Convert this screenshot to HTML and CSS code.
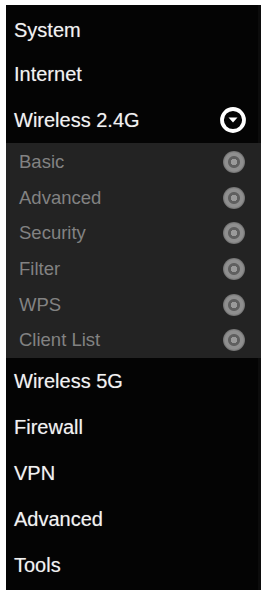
FILE: index.html
```html
<!DOCTYPE html>
<html lang="en">
<head>
    <meta charset="UTF-8">
    <meta name="viewport" content="width=device-width, initial-scale=1.0">
    <title>Router Menu</title>
    <link rel="stylesheet" href="styles.css">
</head>
<body>

    <div id="menu">
        <div class="item">System</div>
        <div class="item">Internet</div>
        <div class="item open">
            <span>Wireless 2.4G</span>
            <svg class="toggle" width="28" height="28" viewBox="0 0 28 28">
                <circle cx="14" cy="14" r="11" fill="none" stroke="#fff" stroke-width="3.8"/>
                <polygon points="9.5,11.5 18.5,11.5 14,16.5" fill="#fff"/>
            </svg>
        </div>

        <div class="submenu">
            <div class="subitem"><span>Basic</span><i class="dot"></i></div>
            <div class="subitem"><span>Advanced</span><i class="dot"></i></div>
            <div class="subitem"><span>Security</span><i class="dot"></i></div>
            <div class="subitem"><span>Filter</span><i class="dot"></i></div>
            <div class="subitem"><span>WPS</span><i class="dot"></i></div>
            <div class="subitem"><span>Client List</span><i class="dot"></i></div>
        </div>

        <div class="item">Wireless 5G</div>
        <div class="item">Firewall</div>
        <div class="item">VPN</div>
        <div class="item">Advanced</div>
        <div class="item">Tools</div>
    </div>

</body>
</html>
```

FILE: styles.css
```css
body {
    font-family: 'Liberation Sans', Arial, sans-serif;
    margin: 0;
    background-color: #fff;
}

#menu {
    width: 255px;
    height: 585px;
    margin: 5px 0 0 6px;
    background-color: #040404;
    box-shadow: inset -3px 0 0 #0c0c0c;
}

.item {
    display: flex;
    align-items: center;
    justify-content: space-between;
    height: 46px;
    padding: 0 14px 0 8px;
    font-size: 20px;
    color: #f2f2f2;
    text-shadow: 0 0 1px rgba(255, 255, 255, 0.4);
    box-sizing: border-box;
}

.item:first-child {
    padding-top: 5px;
}

.item .toggle {
    display: block;
}

.submenu {
    background-color: #232323;
    padding-top: 1px;
}

.subitem {
    display: flex;
    align-items: center;
    justify-content: space-between;
    height: 35.7px;
    padding: 0 16px 0 13px;
    font-size: 18.5px;
    color: #828282;
}

.dot {
    width: 22px;
    height: 22px;
    border-radius: 50%;
    background: radial-gradient(circle, #9a9a9a 0 3px, #5f5f5f 3.5px 5.5px, #8f8f8f 6.5px 9px, #6e6e6e 11px);
}
```
